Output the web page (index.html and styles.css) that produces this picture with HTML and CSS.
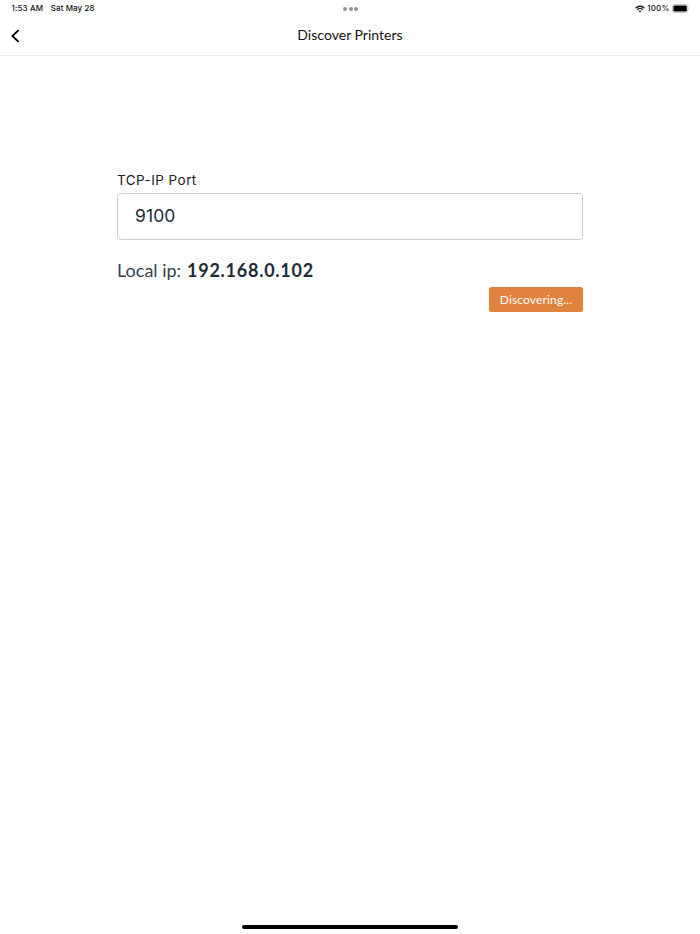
FILE: index.html
```html
<!DOCTYPE html>
<html lang="en">
<head>
<meta charset="utf-8">
<title>Discover Printers</title>
<link rel="stylesheet" href="styles.css">
</head>
<body>
<div class="statusbar">
  <div class="clock"><span class="time">1:53 AM</span><span class="date">Sat May 28</span></div>
  <div class="dots"><i></i><i></i><i></i></div>
  <div class="device">
    <svg class="wifi" width="10" height="8" viewBox="0 0 10 8" fill="none" stroke="#111" stroke-width="1.3"><path d="M.6 3.1a6.2 6.2 0 0 1 8.8 0M2.2 4.8a4 4 0 0 1 5.6 0"/><path d="M3.6 6.1a2 2 0 0 1 2.8 0L5 7.6z" fill="#111" stroke="none"/></svg>
    <span class="percent">100%</span>
    <svg class="battery" width="18" height="9" viewBox="0 0 18 9"><rect x=".4" y=".4" width="15.4" height="8.2" rx="2.4" fill="#fff" stroke="#b5b5b5" stroke-width=".8"/><rect x="1.4" y="1.4" width="13.4" height="6.2" rx="1.3" fill="#000"/><path d="M16.7 3.2q1.2 1.3 0 2.6z" fill="#aaa"/></svg>
  </div>
</div>
<header class="navbar">
  <button class="back" aria-label="Back"><svg width="10" height="14" viewBox="0 0 10 14" fill="none" stroke="#000" stroke-width="1.9"><path d="M8.6 1.1 2.4 7l6.2 5.9"/></svg></button>
  <h1 class="title">Discover Printers</h1>
</header>
<main class="content">
  <label class="label" for="port"><span>TCP-IP Port</span></label>
  <div class="field" id="port"><span>9100</span></div>
  <p class="local"><span class="key">Local ip:</span><strong class="ip">192.168.0.102</strong></p>
  <button class="discover"><span>Discovering...</span></button>
</main>
<div class="home"></div>
</body>
</html>
```
FILE: styles.css
```css
* { box-sizing: border-box; }
body {
  margin: 0;
  height: 934px;
  overflow: hidden;
  display: flex;
  flex-direction: column;
  background: #fff;
  color: #202a37;
  font-family: Lato, "Liberation Sans", sans-serif;
}
button { border: 0; padding: 0; background: none; font: inherit; }
.statusbar {
  height: 17px;
  padding: 0 10.5px 0 11.5px;
  display: grid;
  grid-template-columns: 1fr auto 1fr;
  align-items: center;
  font: 500 8px/17px Inter, sans-serif;
  color: #111;
}
.clock { display: flex; gap: 7.5px; }
.time { letter-spacing: .13px; }
.date { letter-spacing: .1px; }
.dots { display: flex; gap: 1.5px; padding-top: 1px; }
.dots i { width: 4px; height: 4px; border-radius: 50%; background: #939393; }
.device { display: flex; justify-content: flex-end; align-items: center; }
.percent { margin: 0 2px 0 2.5px; letter-spacing: .15px; }
.navbar {
  height: 39px;
  border-bottom: 1px solid #ececec;
  display: grid;
  grid-template-columns: 40px 1fr 40px;
  align-items: center;
}
.back { padding: 0 0 1px 10px; display: flex; }
.title {
  margin: 0;
  padding-bottom: 3px;
  text-align: center;
  font-size: 14px;
  line-height: 18px;
  font-weight: 400;
  letter-spacing: .02px;
  color: #111;
}
.content {
  width: 466px;
  margin: 115px auto 0 117px;
  display: flex;
  flex-direction: column;
  flex: 1;
}
.label {
  height: 22px;
  font: 400 13.5px/18px Inter, sans-serif;
  letter-spacing: .45px;
  color: #202124;
}
.field {
  height: 47px;
  border: 1px solid #cacdd4;
  border-radius: 3.5px;
  padding-left: 17px;
  font: 400 17.5px/43px Inter, sans-serif;
  letter-spacing: .1px;
}
.local {
  margin: 18px 0 0;
  height: 29px;
  line-height: 24px;
  font-size: 18px;
  display: flex;
  gap: 6px;
}
.key { color: #374151; }
.ip { font-weight: 700; letter-spacing: .73px; }
.discover {
  align-self: flex-end;
  width: 94px;
  height: 25px;
  border-radius: 2.5px;
  background: #e0833e;
  color: #fff;
  font-size: 12px;
  line-height: 23px;
  letter-spacing: .15px;
  padding-bottom: 1px;
}
.home {
  width: 216px;
  height: 4px;
  margin: 0 auto 5.5px;
  border-radius: 2px;
  background: #000;
}
```
